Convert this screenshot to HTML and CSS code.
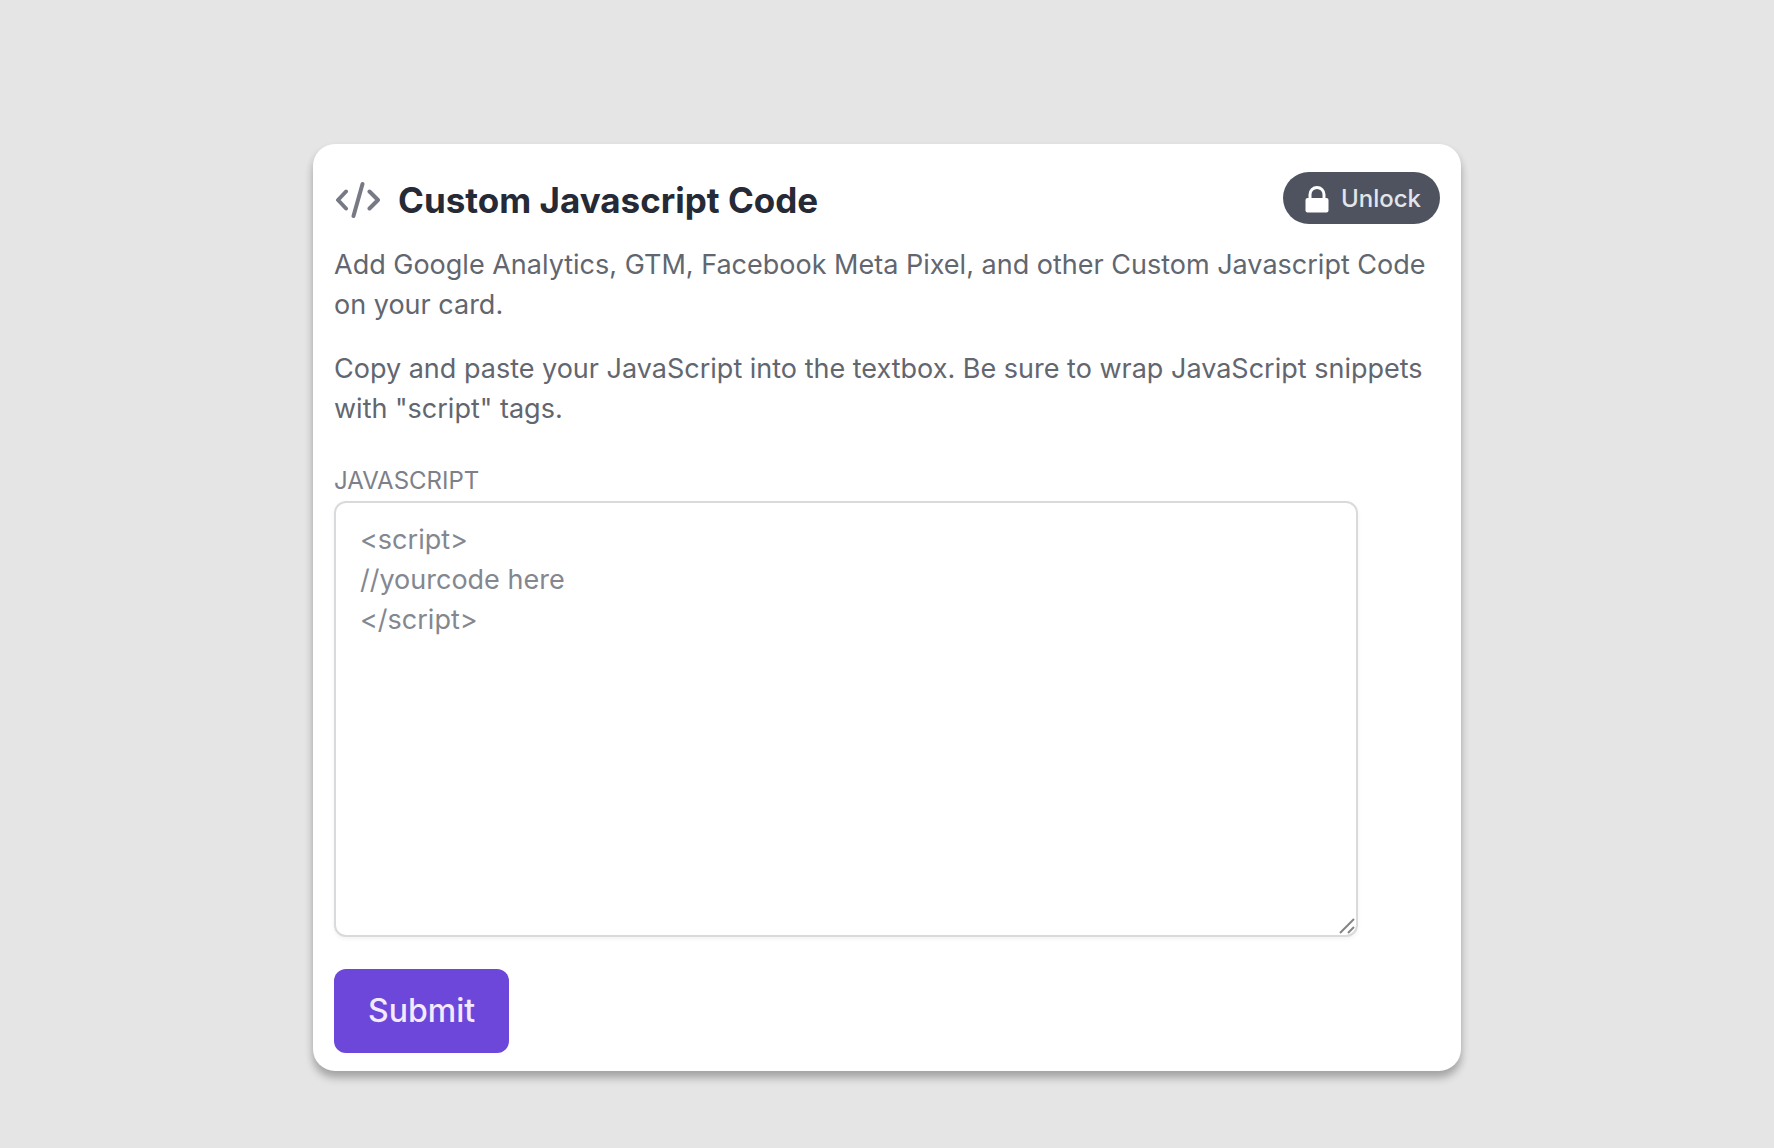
FILE: index.html
```html
<!DOCTYPE html>
<html lang="en">
<head>
<meta charset="utf-8">
<meta name="viewport" content="width=device-width, initial-scale=1">
<title>Custom Javascript Code</title>
<link rel="stylesheet" href="styles.css">
</head>
<body>
<main class="page">
  <section class="card">
    <header class="card-header">
      <svg class="code-icon" viewBox="0 0 46 38" aria-hidden="true">
        <path d="M12 10.500 4 19l8 8.500M35.500 10.500 44 19l-8.500 8.500M28.500 3 19.500 35"/>
      </svg>
      <h1 class="title">Custom Javascript Code</h1>
      <button class="unlock" type="button">
        <svg class="lock-icon" viewBox="0 0 24 28" aria-hidden="true">
          <path class="shackle" d="M5 14V9.500a7 7 0 0 1 14 0V14"/>
          <rect x="0.500" y="13" width="23" height="14.500" rx="2"/>
        </svg>
        Unlock
      </button>
    </header>
    <div class="description">
      <p>Add Google Analytics, GTM, Facebook Meta Pixel, and other Custom Javascript Code on your card.</p>
      <p>Copy and paste your JavaScript into the textbox. Be sure to wrap JavaScript snippets with "script" tags.</p>
    </div>
    <form class="form">
      <label class="label" for="code">JAVASCRIPT</label>
      <div class="field">
        <textarea class="code-input" id="code" placeholder="&lt;script&gt;&#10;//yourcode here&#10;&lt;/script&gt;"></textarea>
        <svg class="grip" viewBox="0 0 16 16" aria-hidden="true"><path d="M1 15 15 1M9 15l6-6"/></svg>
      </div>
      <button class="submit" type="submit">Submit</button>
    </form>
  </section>
</main>
</body>
</html>
```

FILE: styles.css
```css
* {
  box-sizing: border-box;
}

body {
  margin: 0;
  min-height: 100vh;
  background: #e5e5e5;
  color: #62666f;
  font-family: Inter, "Liberation Sans", sans-serif;
  font-size: 27px;
  line-height: 40px;
}

.page {
  padding: 144px 24px 76px;
}

.card {
  max-width: 1148px;
  margin: 0 auto;
  padding: 28px 21px 18px;
  border-radius: 22px;
  background: #fff;
  box-shadow: 0 7px 8px rgba(0, 0, 0, 0.24), 0 4px 8px rgba(0, 0, 0, 0.08);
}

.card-header {
  display: flex;
  align-items: center;
  gap: 18px;
}

.code-icon {
  width: 46px;
  height: 38px;
  margin-top: 4px;
  flex: none;
  fill: none;
  stroke: #777985;
  stroke-width: 4;
  stroke-linecap: round;
  stroke-linejoin: round;
}

.title {
  flex: 1;
  margin: 4px 0 0;
  color: #252a36;
  font-size: 35px;
  font-weight: 700;
  line-height: 48px;
}

.unlock {
  display: flex;
  align-items: center;
  justify-content: center;
  gap: 12px;
  height: 52px;
  padding: 1px 19px 0 22px;
  border: 0;
  border-radius: 26px;
  background: #4e535f;
  color: #e3e5ea;
  font: 500 24px/32px Inter, "Liberation Sans", sans-serif;
}

.lock-icon {
  width: 24px;
  height: 28px;
  fill: #fff;
}

.shackle {
  fill: none;
  stroke: #fff;
  stroke-width: 3;
}

.description {
  display: grid;
  gap: 24px;
  margin-top: 21px;
}

.description p {
  margin: 0;
}

.form {
  display: flex;
  flex-direction: column;
  align-items: flex-start;
  margin-top: 36px;
}

.label {
  margin-bottom: 4px;
  color: #7d8088;
  font-size: 24px;
  line-height: 32px;
}

.field {
  position: relative;
  width: 100%;
  max-width: 1024px;
}

.code-input {
  display: block;
  width: 100%;
  height: 436px;
  padding: 17px 24px;
  border: 2px solid #d9dadc;
  border-radius: 12px;
  background: #fff;
  box-shadow: 0 2px 4px rgba(0, 0, 0, 0.05);
  color: #62666f;
  font: inherit;
  resize: vertical;
}

.code-input::placeholder {
  color: #84878f;
}

.code-input::-webkit-resizer {
  display: none;
}

.grip {
  position: absolute;
  right: 3px;
  bottom: 3px;
  width: 16px;
  height: 16px;
  fill: none;
  stroke: #858585;
  stroke-width: 2;
  pointer-events: none;
}

.submit {
  height: 84px;
  margin-top: 32px;
  padding: 0 34px;
  border: 0;
  border-radius: 12px;
  background: #6d47d9;
  color: #f3eaff;
  font: 500 32px/40px Inter, "Liberation Sans", sans-serif;
}
```
